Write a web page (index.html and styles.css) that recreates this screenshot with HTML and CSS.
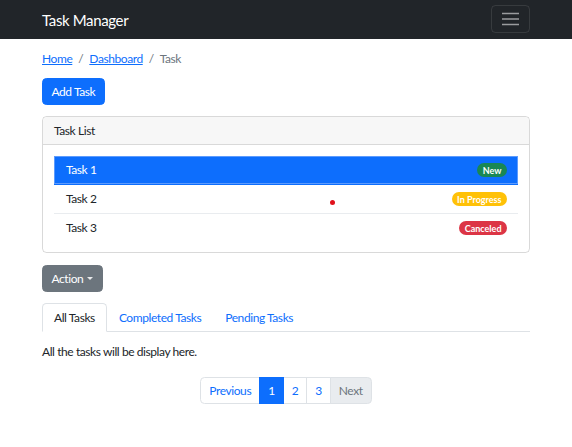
FILE: index.html
```html
<!DOCTYPE html>
<html lang="en">
<head>
<meta charset="utf-8">
<title>Task Manager</title>
<link rel="stylesheet" href="styles.css">
</head>
<body>
<nav class="navbar">
  <a class="brand" href="#">Task Manager</a>
  <button class="toggler" type="button" aria-label="Toggle navigation">
    <svg width="17" height="14" viewBox="0 0 17 14" aria-hidden="true"><path d="M0 1.5h17M0 7h17M0 12.5h17" stroke="rgba(255,255,255,0.55)" stroke-width="1.6"/></svg>
  </button>
</nav>

<main class="container">
  <ol class="breadcrumb">
    <li><a href="#">Home</a></li>
    <li class="sep">/</li>
    <li><a href="#">Dashboard</a></li>
    <li class="sep">/</li>
    <li class="current">Task</li>
  </ol>

  <button class="btn btn-primary" type="button">Add Task</button>

  <section class="card">
    <div class="card-header">Task List</div>
    <div class="card-body">
      <ul class="list-group">
        <li class="list-item active">Task 1 <span class="badge badge-green">New</span></li>
        <li class="list-item">Task 2 <span class="badge badge-yellow">In Progress</span></li>
        <li class="list-item">Task 3 <span class="badge badge-red">Canceled</span></li>
      </ul>
    </div>
  </section>

  <button class="btn btn-secondary" type="button">Action <span class="caret"></span></button>

  <ul class="tabs">
    <li><a class="tab active" href="#">All Tasks</a></li>
    <li><a class="tab" href="#">Completed Tasks</a></li>
    <li><a class="tab" href="#">Pending Tasks</a></li>
  </ul>
  <p class="tab-content">All the tasks will be display here.</p>

  <ul class="pagination">
    <li><a class="page" href="#">Previous</a></li>
    <li><a class="page active" href="#">1</a></li>
    <li><a class="page" href="#">2</a></li>
    <li><a class="page" href="#">3</a></li>
    <li><span class="page disabled">Next</span></li>
  </ul>
</main>
<span class="dot"></span>
</body>
</html>
```
FILE: styles.css
```css
* { box-sizing: border-box; }
html, body { margin: 0; padding: 0; }
body {
  font-family: Lato, "Noto Sans", sans-serif;
  font-size: 12px;
  line-height: 18px;
  letter-spacing: -0.035em;
  color: #212529;
  background: #fff;
}
a { color: #0d6efd; }
ul, ol { list-style: none; margin: 0; padding: 0; }

.navbar {
  height: 39px;
  background: #212529;
  display: flex;
  align-items: center;
  justify-content: space-between;
  padding: 0 42px;
}
.brand {
  color: #fff;
  font-size: 15px;
  letter-spacing: -0.024em;
  text-decoration: none;
  line-height: 20px;
}
.toggler {
  width: 39px;
  height: 28px;
  margin-top: -1px;
  border: 1px solid rgba(255,255,255,0.1);
  border-radius: 4.5px;
  background: transparent;
  display: flex;
  align-items: center;
  justify-content: center;
  padding: 0;
}
.toggler svg { display: block; }

.container { padding: 0 42px; }

.breadcrumb {
  display: flex;
  gap: 6px;
  margin-top: 11px;
  line-height: 18px;
}
.breadcrumb .sep, .breadcrumb .current { color: #6c757d; }

.btn {
  display: inline-flex;
  align-items: center;
  font-family: inherit;
  font-size: 12px;
  letter-spacing: inherit;
  line-height: 18px;
  padding: 3.5px 8.5px;
  border: 1px solid transparent;
  border-radius: 4.5px;
  color: #fff;
}
.btn-primary { background: #0d6efd; border-color: #0d6efd; margin-top: 10px; }
.btn-secondary { background: #6c757d; border-color: #6c757d; margin-top: 12px; }
.caret {
  display: inline-block;
  margin-left: 4px;
  border-top: 3.5px solid #fff;
  border-left: 3.5px solid transparent;
  border-right: 3.5px solid transparent;
  opacity: 0.85;
}

.card {
  margin-top: 11px;
  border: 1px solid rgba(0,0,0,0.15);
  border-radius: 4.5px;
}
.card-header {
  padding: 4.5px 11px;
  background: #f7f7f7;
  border-bottom: 1px solid rgba(0,0,0,0.12);
  border-radius: 4.5px 4.5px 0 0;
}
.card-body { padding: 11px 11px 10px; }
.list-item {
  display: flex;
  align-items: center;
  justify-content: space-between;
  padding: 5px 11px 5px 12px;
  border-bottom: 1px solid #e9ecef;
}
.list-item:last-child { border-bottom: 0; }
.list-item.active {
  background: #0d6efd;
  color: #fff;
  border-bottom-color: #0d6efd;
  box-shadow: inset 0 0 0 1px #5d9bfd;
}
.badge {
  font-size: 9px;
  font-weight: 700;
  line-height: 9px;
  letter-spacing: 0;
  padding: 2.5px 5.5px;
  border-radius: 10px;
  color: #fff;
}
.badge-green { background: #198754; }
.badge-yellow { background: #ffc107; }
.badge-red { background: #dc3545; }

.tabs {
  display: flex;
  margin-top: 11px;
  border-bottom: 1px solid #dee2e6;
}
.tab {
  display: block;
  padding: 4.5px 11px;
  margin-bottom: -1px;
  border: 1px solid transparent;
  border-radius: 4.5px 4.5px 0 0;
  text-decoration: none;
  color: #0d6efd;
}
.tab.active {
  color: #212529;
  background: #fff;
  border-color: #dee2e6 #dee2e6 #fff;
}
.tab-content { margin: 11px 0 0; }

.pagination {
  display: flex;
  justify-content: center;
  margin-top: 16px;
}
.page {
  display: block;
  padding: 3.5px 8px;
  border: 1px solid #dee2e6;
  margin-left: -1px;
  text-decoration: none;
  color: #0d6efd;
  background: #fff;
}
.pagination li:first-child .page { border-radius: 4.5px 0 0 4.5px; margin-left: 0; }
.pagination li:last-child .page { border-radius: 0 4.5px 4.5px 0; }
.page.active { background: #0d6efd; border-color: #0d6efd; color: #fff; position: relative; }
.page.disabled { background: #e9ecef; color: #6c757d; }

.dot {
  position: absolute;
  left: 330px;
  top: 200px;
  width: 5px;
  height: 5px;
  border-radius: 50%;
  background: #e0111b;
}
```
